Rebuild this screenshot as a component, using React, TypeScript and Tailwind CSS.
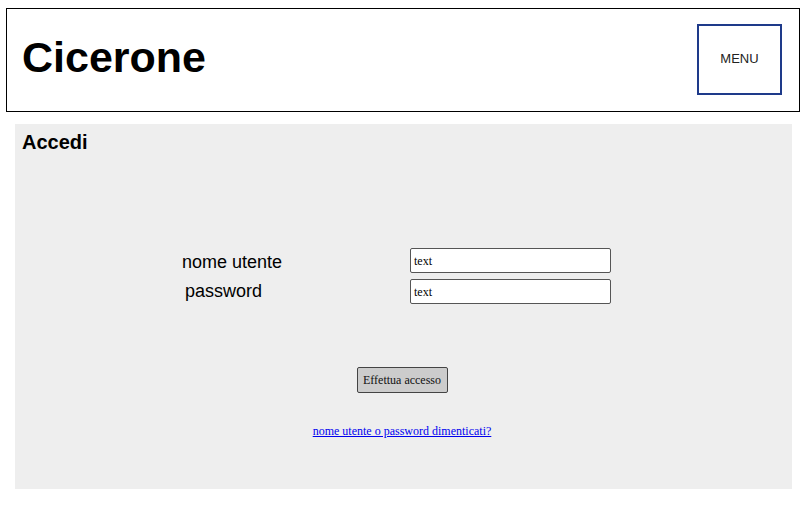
export default function App() {
  return (
    <div className="w-[811px] h-[508px] bg-white overflow-hidden" style={{ fontFamily: '"Liberation Sans", Arial, sans-serif' }}>
      {/* Header */}
      <header className="ml-[6px] mt-[8px] w-[794px] h-[104px] border border-black flex items-center justify-between pl-[15px] pr-[17px]">
        <h1 className="text-[43px] font-bold leading-none text-black -mt-[6px]">Cicerone</h1>
        <button className="w-[85px] h-[71px] border-2 border-[#1e3a8a] bg-white text-[13px] text-[#222] -mt-[2px]">
          MENU
        </button>
      </header>

      {/* Login panel */}
      <section className="ml-[15px] mt-[12px] w-[777px] h-[365px] bg-[#eeeeee] pt-[6px]">
        <h2 className="pl-[7px] text-[20px] font-bold leading-[24px] text-black">Accedi</h2>

        <div className="mt-[94px] flex flex-col gap-[6px]">
          <div className="flex items-center h-[25px] pl-[167px]">
            <span className="w-[228px] pt-[4px] text-[18px] leading-[21px] text-black">nome utente</span>
            <div className="w-[201px] h-[25px] border-[1.5px] border-[#555] rounded-[2px] bg-white px-[3px] flex items-center text-[12px] text-black" style={{ fontFamily: '"Liberation Serif", "Times New Roman", serif' }}>
              text
            </div>
          </div>
          <div className="flex items-center h-[25px] pl-[167px]">
            <span className="w-[228px] pl-[3px] text-[18px] leading-[25px] text-black">password</span>
            <div className="w-[201px] h-[25px] border-[1.5px] border-[#555] rounded-[2px] bg-white px-[3px] flex items-center text-[12px] text-black" style={{ fontFamily: '"Liberation Serif", "Times New Roman", serif' }}>
              text
            </div>
          </div>
        </div>

        <div className="mt-[63px] flex flex-col items-center pr-[3px]" style={{ fontFamily: '"Liberation Serif", "Times New Roman", serif' }}>
          <button className="w-[91px] h-[26px] border-[1.5px] border-[#444] rounded-[2px] bg-[#cccccc] text-[12px] text-[#111]">
            Effettua accesso
          </button>
          <a href="#" className="mt-[31px] text-[12px] leading-[14px] text-[#0000ee] underline">
            nome utente o password dimenticati?
          </a>
        </div>
      </section>
    </div>
  );
}
